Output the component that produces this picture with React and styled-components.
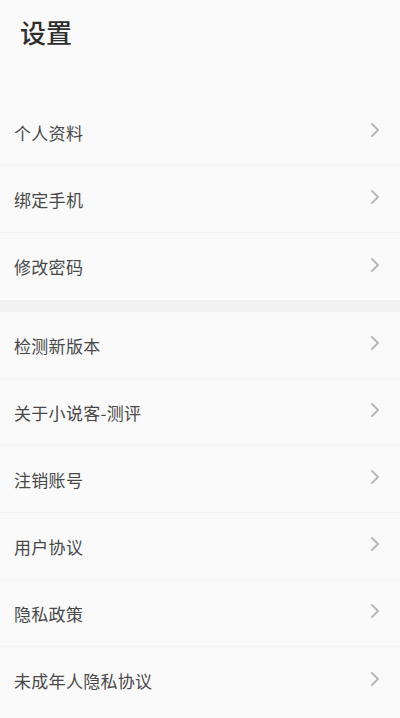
import React from "react";
import styled, { createGlobalStyle } from "styled-components";

const GlobalStyle = createGlobalStyle`
  html, body {
    margin: 0;
    padding: 0;
    background: #fafafa;
  }
  body {
    font-family: "Noto Sans CJK SC", "Noto Sans", sans-serif;
  }
`;

const Page = styled.div`
  width: 400px;
  min-height: 718px;
  background: #fafafa;
`;

const Header = styled.div`
  height: 99px;
  box-sizing: border-box;
  padding: 18px 0 0 20px;
`;

const Title = styled.h1`
  margin: 0;
  font-size: 26px;
  line-height: 28px;
  font-weight: 500;
  color: #2e2e2e;
`;

const Group = styled.div`
  display: flex;
  flex-direction: column;
`;

const Gap = styled.div`
  height: 12px;
  background: #f1f1f1;
`;

const Row = styled.div`
  display: flex;
  align-items: center;
  justify-content: space-between;
  height: 67px;
  box-sizing: border-box;
  padding: 0 20px 0 14px;
  border-bottom: ${(p) => (p.last ? "none" : "1px solid #f1f1f1")};
`;

const Label = styled.span`
  font-size: 17px;
  color: #484848;
  letter-spacing: 0.3px;
`;

const Chevron = styled.svg`
  width: 10px;
  height: 16px;
  margin-bottom: 4px;
`;

function Arrow() {
  return (
    <Chevron viewBox="0 0 10 16">
      <polyline
        points="2,2 8,8 2,14"
        fill="none"
        stroke="#b8b8b8"
        strokeWidth="2"
        strokeLinecap="round"
        strokeLinejoin="round"
      />
    </Chevron>
  );
}

const groups = [
  ["个人资料", "绑定手机", "修改密码"],
  ["检测新版本", "关于小说客-测评", "注销账号", "用户协议", "隐私政策", "未成年人隐私协议"],
];

export default function App() {
  return (
    <Page>
      <GlobalStyle />
      <Header>
        <Title>设置</Title>
      </Header>
      {groups.map((items, gi) => (
        <React.Fragment key={gi}>
          {gi > 0 && <Gap />}
          <Group>
            {items.map((label, i) => (
              <Row key={label} last={i === items.length - 1}>
                <Label>{label}</Label>
                <Arrow />
              </Row>
            ))}
          </Group>
        </React.Fragment>
      ))}
    </Page>
  );
}
